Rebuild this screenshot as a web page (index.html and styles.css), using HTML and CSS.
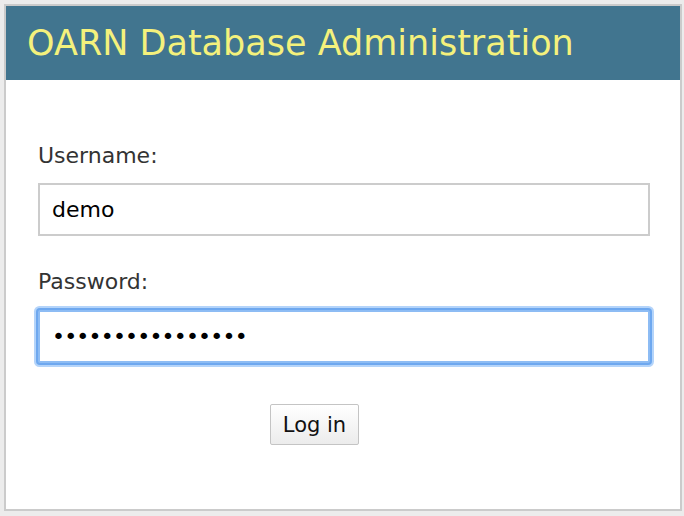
FILE: index.html
```html
<!DOCTYPE html>
<html lang="en">
<head>
<meta charset="utf-8">
<title>OARN Database Administration</title>
<link rel="stylesheet" href="styles.css">
</head>
<body>
<div class="panel">
  <div class="header"><h1 class="title">OARN Database Administration</h1></div>
  <form class="login">
    <label class="label" for="user">Username:</label>
    <input class="field" id="user" type="text" value="demo">
    <label class="label label-pass" for="pass">Password:</label>
    <input class="field field-focus" id="pass" type="password" value="demodemodemodemo">
    <div class="actions"><button class="btn" type="button">Log in</button></div>
  </form>
</div>
</body>
</html>
```
FILE: styles.css
```css
html, body { margin: 0; padding: 0; }
body {
  background: #ececec;
  padding: 4px;
  font-family: "DejaVu Sans", Verdana, sans-serif;
}
.panel {
  width: 678px;
  height: 507px;
  box-sizing: border-box;
  border: 2px solid #cbcbcb;
  background: #fff;
}
.header {
  height: 74px;
  background: #41758f;
  display: flex;
  align-items: center;
  padding-left: 21px;
}
.title {
  margin: 0;
  font-weight: normal;
  font-size: 35px;
  color: #f4f17c;
  letter-spacing: 0;
}
.login {
  padding: 63px 30px 0 32px;
}
.label {
  display: block;
  font-size: 22px;
  line-height: 26px;
  color: #333;
  margin-bottom: 14px;
}
.label-pass { margin-top: 33px; margin-bottom: 15px; }
.field {
  display: block;
  width: 100%;
  height: 53px;
  box-sizing: border-box;
  border: 2px solid #cccccc;
  padding: 0 12px;
  font-family: "DejaVu Sans", Verdana, sans-serif;
  font-size: 22px;
  color: #000;
  background: #fff;
  outline: none;
  margin: 0;
}
.field-focus {
  border-color: #8dbcf4;
  box-shadow: 0 0 0 2px #6ea8ef, 0 0 0 4px #b4d4fa;
  border-radius: 2px;
  letter-spacing: -0.8px;
}
.actions {
  padding-left: 232px;
  margin-top: 41px;
}
.btn {
  width: 89px;
  height: 41px;
  box-sizing: border-box;
  border: 1px solid #c4c4c4;
  border-radius: 2px;
  background: linear-gradient(#ffffff, #ececec);
  font-family: "DejaVu Sans", Verdana, sans-serif;
  font-size: 21px;
  color: #111;
  padding: 0;
}
```
